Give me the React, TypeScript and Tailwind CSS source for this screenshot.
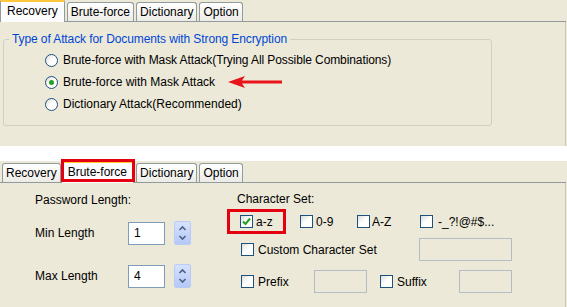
import React from "react";

const tabNames = ["Recovery", "Brute-force", "Dictionary", "Option"];

function Tabs({ active, marked }: { active: number; marked?: boolean }) {
  return (
    <div className="flex h-[22px] items-end border-b border-[#919B9C] pr-[2px]">
      {tabNames.map((name, i) => {
        const on = i === active;
        return (
          <div
            key={name}
            className={
              on
                ? "relative z-10 -mb-px flex h-[23px] items-center rounded-t-[3px] border-x border-t-[3px] border-x-[#919B9C] border-t-[#FFC83C] bg-[#FCFCFE] px-[6px] pb-[2px]"
                : "ml-[2px] flex h-[19px] items-center rounded-t-[3px] border-x border-t border-[#919B9C] bg-gradient-to-b from-white to-[#ECEBE6] px-[3px]"
            }
          >
            {on && marked && (
              <div className="pointer-events-none absolute -left-[1px] -right-[2px] -top-[4px] bottom-[1px] border-[3px] border-[#E4000F]" />
            )}
            {name}
          </div>
        );
      })}
    </div>
  );
}

function Radio({ checked }: { checked?: boolean }) {
  return (
    <span className="flex h-[13px] w-[13px] items-center justify-center rounded-full border border-[#1C5180] bg-gradient-to-br from-[#DCDCD7] via-white to-white">
      {checked && <span className="h-[5px] w-[5px] rounded-full bg-[#21A121]" />}
    </span>
  );
}

function Check({ checked }: { checked?: boolean }) {
  return (
    <span className="flex h-[13px] w-[13px] shrink-0 items-center justify-center border border-[#1C5180] bg-gradient-to-br from-[#DCDCD7] via-white to-white">
      {checked && (
        <svg width="9" height="9" viewBox="0 0 9 9">
          <path d="M1 4.5 L3.5 7 L8 1.5" fill="none" stroke="#21A121" strokeWidth="2" />
        </svg>
      )}
    </span>
  );
}

function Spinner() {
  return (
    <div className="flex h-[24px] w-[17px] flex-col items-center justify-center rounded-[2px] border border-[#B9CCF5] bg-gradient-to-b from-[#D6E2FD] to-[#B5C8F7]">
      <svg width="9" height="18" viewBox="0 0 9 18">
        <path d="M1.5 6 L4.5 3 L7.5 6" fill="none" stroke="#4D6185" strokeWidth="1.6" />
        <path d="M1.5 12 L4.5 15 L7.5 12" fill="none" stroke="#4D6185" strokeWidth="1.6" />
      </svg>
    </div>
  );
}

function Field({ w, value }: { w: string; value?: string }) {
  return value !== undefined ? (
    <div className={`${w} flex h-[23px] items-center border border-[#7F9DB9] bg-white pl-[5px]`}>{value}</div>
  ) : (
    <div className={`${w} h-[23px] border border-[#B4BCC4] bg-[#ECE9D8]`} />
  );
}

export default function App() {
  return (
    <div className="h-[307px] w-[567px] overflow-hidden bg-white font-['Liberation_Sans',Arial,sans-serif] text-[12px] leading-[14px] text-black">
      <div className="h-[146px] bg-[#ECE9D8] pr-[1px]">
        <Tabs active={0} />
        <div className="h-[124px] border-r border-[#C9C7BA] pt-[10px] pl-[3px]">
          <div className="relative mt-[7px] h-[87px] w-[489px] rounded-[3px] border border-[#D0D0BF]">
            <span className="absolute -top-[8px] left-[5px] bg-[#ECE9D8] px-[3px] tracking-[-0.1px] text-[#0046D5]">
              Type of Attack for Documents with Strong Encryption
            </span>
            <div className="flex flex-col gap-[8px] pl-[41px] pt-[13px]">
              <div className="flex items-center gap-[5px]">
                <Radio />
                <span className="tracking-[-0.1px]">Brute-force with Mask Attack(Trying All Possible Combinations)</span>
              </div>
              <div className="flex items-center gap-[5px]">
                <Radio checked />
                <span>Brute-force with Mask Attack</span>
                <svg className="ml-[8px]" width="54" height="12" viewBox="0 0 54 12">
                  <path d="M0 6 L17 0 L14 4.5 L54 4.5 L54 7.5 L14 7.5 L17 12 Z" fill="#E8141A" />
                </svg>
              </div>
              <div className="flex items-center gap-[5px]">
                <Radio />
                <span>Dictionary Attack(Recommended)</span>
              </div>
            </div>
          </div>
        </div>
      </div>

      <div className="h-[15px] bg-white" />

      <div className="h-[146px] bg-[#ECE9D8] pr-[1px]">
        <Tabs active={1} marked />
        <div className="flex h-[124px] border-r border-[#C9C7BA]">
          <div className="ml-[35px] flex w-[192px] flex-col">
            <div className="mt-[10px]">Password Length:</div>
            <div className="mt-[14px] flex items-center">
              <span className="w-[93px]">Min Length</span>
              <Field w="w-[37px]" value="1" />
              <div className="ml-[9px]"><Spinner /></div>
            </div>
            <div className="mt-[19px] flex items-center">
              <span className="w-[93px]">Max Length</span>
              <Field w="w-[37px]" value="4" />
              <div className="ml-[9px]"><Spinner /></div>
            </div>
          </div>

          <div className="flex flex-col">
            <div className="ml-[10px] mt-[9px]">Character Set:</div>
            <div className="mt-[3px] flex h-[25px] items-center">
              <div className="flex h-[25px] w-[59px] items-center border-[3px] border-[#E4000F] pl-[10px]">
                <Check checked />
                <span className="ml-[3px]">a-z</span>
              </div>
              <div className="ml-[14px] flex w-[57px] items-center">
                <Check />
                <span className="ml-[3px]">0-9</span>
              </div>
              <div className="flex w-[63px] items-center">
                <Check />
                <span className="ml-[2px]">A-Z</span>
              </div>
              <div className="flex items-center">
                <Check />
                <span className="ml-[5px]">-_?!@#$...</span>
              </div>
            </div>
            <div className="mt-[4px] flex items-center pl-[14px]">
              <Check />
              <span className="ml-[4px] w-[161px]">Custom Character Set</span>
              <Field w="w-[93px]" />
            </div>
            <div className="mt-[9px] flex items-center pl-[14px]">
              <Check />
              <span className="ml-[4px] w-[56px]">Prefix</span>
              <Field w="w-[53px]" />
              <div className="ml-[13px]"><Check /></div>
              <span className="ml-[4px] w-[62px]">Suffix</span>
              <Field w="w-[53px]" />
            </div>
          </div>
        </div>
      </div>
    </div>
  );
}
